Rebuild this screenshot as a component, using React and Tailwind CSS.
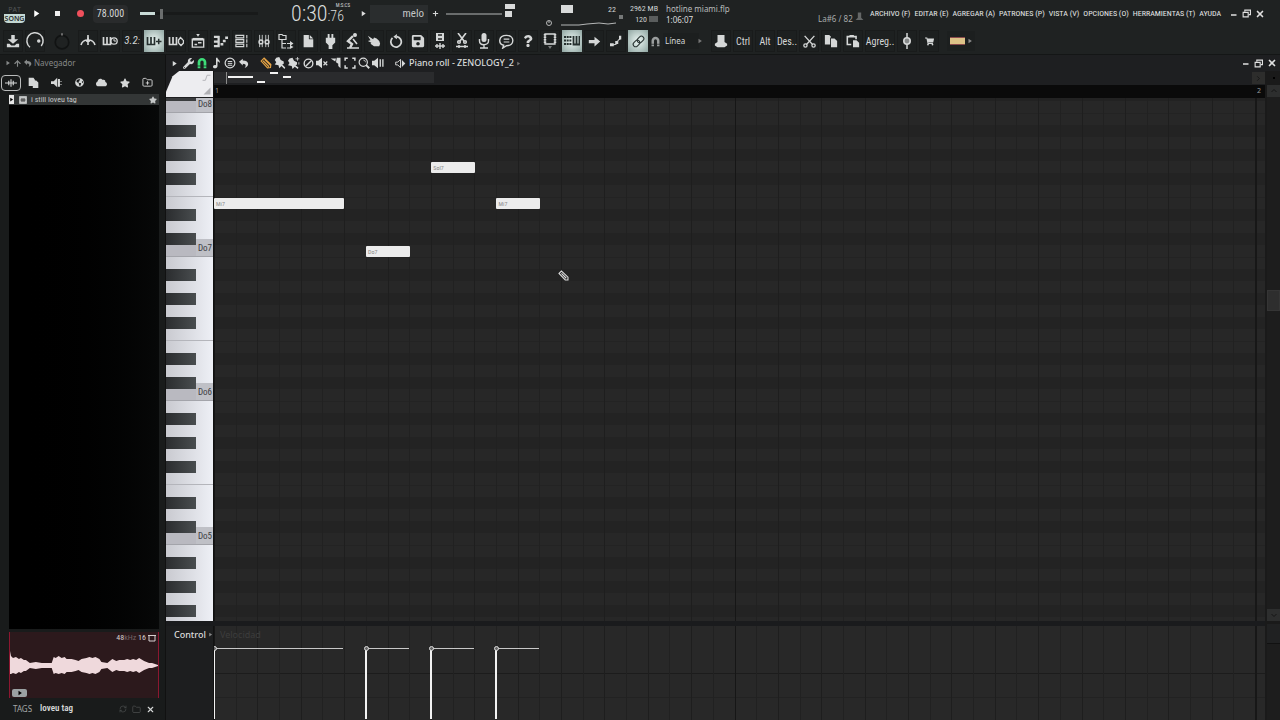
import React, { useState } from 'react';
import { FaSave, FaStar, FaCloud, FaQuestion, FaShoppingCart, FaWrench, FaGlobeAmericas } from 'react-icons/fa';
import { FolderPlus, RefreshCw, Folder, X, ArrowUp } from 'lucide-react';

// Small drawings on a 16 unit canvas
const Svg = ({ size = 14, children, className = '' }) => (
    <svg width={size} height={size} viewBox="0 0 16 16" fill="none" stroke="currentColor" strokeWidth="1.6" aria-hidden="true" className={`shrink-0 ${className}`}>
        {children}
    </svg>
);

const Fill = ({ d, size, className }) => (
    <Svg size={size} className={className}><path d={d} fill="currentColor" stroke="none" /></Svg>
);

const Triangle = ({ size = 8, className }) => <Fill size={size} className={className} d="M4 2l9 6-9 6z" />;

const HorseShoe = ({ size = 12, className }) => (
    <Svg size={size} className={className}><path d="M4 15V7a4 4 0 0 1 8 0v8" strokeWidth="3.6" /><path d="M1 12h14" stroke="#1e2121" strokeWidth="1" /></Svg>
);

const Restore = () => (
    <Svg size={9}><path d="M5 5V2h10v8h-3" strokeWidth="2" /><path d="M2 6h9v8H2z" strokeWidth="2" /></Svg>
);

const Keys = ({ children }) => (
    <Svg size={16}>
        <path d="M1.500 4v7.500h7V4M5 4v7" strokeWidth="1.700" />
        {children}
    </Svg>
);

const TOOLS = [
    { name: 'Metronome', icon: <Svg size={16}><path d="M8 2v10M1 12c1-4 4-5 7-5s6 1 7 5" /><path d="M6 9l2-6 2 6z" fill="currentColor" stroke="none" /></Svg> },
    { name: 'Wait for input', icon: <Keys><circle cx="12" cy="8" r="3.2" strokeWidth="1.3" /><path d="M12 6v2h2" strokeWidth="1" /></Keys> },
    { name: 'Countdown', icon: <span className="text-[11px] italic font-['Roboto_Condensed','Roboto',sans-serif]">3.2<small>:</small></span> },
    { name: 'Blend recording', active: true, icon: <Keys><path d="M10 8.500h5.500M12.700 5.700v5.500" strokeWidth="1.500" /></Keys> },
    { name: 'Loop recording', icon: <Keys><path d="M10.500 10V7l2-2.500 2.500 2.500M15.500 7v3L13 12.500 10.500 10" strokeWidth="1.400" /></Keys> },
    { name: 'Playlist', icon: <Svg size={14}><path d="M1.500 6h13v9h-13z" /><path d="M2 6h12" strokeWidth="3" /><path d="M4 12h3M8 10h4" /><path d="M6 0h4L8 3z" fill="currentColor" stroke="none" /></Svg> },
    { name: 'Piano roll', icon: <Svg size={15}><path d="M1 3h6M1 8h6M1 13h6M6 2v12" strokeWidth="2.400" /><path d="M8 11h3M10.500 7.500h3M13 4h3" strokeWidth="2.600" /></Svg> },
    { name: 'Channel rack', icon: <Svg size={14}><path d="M1 1.500h9v3H1zM1 6.500h9v3H1zM1 11.500h9v3H1zM13.500 1v4M13.500 6v4M13.500 11v4" strokeWidth="1.300" /></Svg> },
    { name: 'Mixer', icon: <Svg size={14}><path d="M3 1v14M6 1v14M10 1v14M13 1v14" strokeWidth="1" /><circle cx="4.500" cy="9" r="2.200" /><circle cx="11.500" cy="9" r="2.200" /></Svg> },
    { name: 'Browser', icon: <Svg size={16}><path d="M1 1.500h3l1 1h3v4H1zM4 7v8h4M4 10.500h4M9 10.500h3M9 15h3" strokeWidth="1.200" /><path d="M12 8l3.500 2.500L12 13zM12 12l3.500 2L12 16z" fill="currentColor" stroke="none" /></Svg> },
    { name: 'Project', icon: <Fill size={14} d="M3 1h6v5h5v9H3zM10 1l4 4h-4z" /> },
    { name: 'Plugins', icon: <Fill size={15} d="M5 0h2v4h2V0h2v4h2v5l-3 3v4H6v-4L3 9V4h2z" /> },
    { name: 'Tempo tapper', icon: <Svg size={16}><circle cx="11" cy="2" r="1.200" fill="currentColor" /><path d="M9 3L4 8l4 3-2 4" strokeWidth="2.400" /><path d="M3 15h12M9 6l4 5" strokeWidth="1.600" /></Svg> },
    { name: 'Touch', icon: <Fill size={14} d="M1 2l6 4 1-2 3 1 3 3 1 3-1 3H8l-4-3 1-1-4-2 3-1z" /> },
    { name: 'Undo', icon: <Svg size={14}><path d="M9 3a6 6 0 1 1-5 1.500" strokeWidth="2" /><path d="M9 0v6L5 3z" fill="currentColor" stroke="none" /></Svg> },
    { name: 'Save', icon: <FaSave size={14} /> },
    { name: 'Save new version', icon: <Svg size={16}><path d="M4 0h8v8H4z" fill="currentColor" stroke="none" /><path d="M6 6h4M6 2h4" stroke="#222424" /><path d="M3 13h10M5 11v4M8 10v6M11 11v4" strokeWidth="1.400" /></Svg> },
    { name: 'Cut sample', icon: <Svg size={16}><path d="M4 0l6 8M12 0L6 8" /><circle cx="5" cy="9" r="1.300" /><circle cx="11" cy="9" r="1.300" /><path d="M2 13.500h12M5 12v3M11 12v3" strokeWidth="1.500" /></Svg> },
    { name: 'Record audio', icon: <Svg size={16}><rect x="5.500" y="0" width="5" height="9" rx="2.500" fill="currentColor" stroke="none" /><path d="M3.500 6v2c0 5 9 5 9 0V6M8 12v3M4 15h8" strokeWidth="1.400" /></Svg> },
    { name: 'Feedback', icon: <Svg size={15}><path d="M5 12L4 15l4-2.500c9 0 9-11 0-11s-9 9-3 10.500z" strokeWidth="1.500" /><path d="M5 5.500h6M5 8.500h6" strokeWidth="1.200" /></Svg> },
    { name: 'Help', icon: <FaQuestion size={12} /> },
    { name: 'Arrangement', icon: <Svg size={16}><path d="M3 1h10v10H3z" strokeWidth="1.300" /><path d="M3 1v10M13 1v10" strokeWidth="2.500" strokeDasharray="1.500 1" /><path d="M6 13h4l-2 3z" fill="currentColor" stroke="none" opacity=".5" /></Svg> },
    { name: 'Typing keyboard', active: true, icon: <Svg size={16}><path d="M0 4h8M0 7.500h8M0 11h8" strokeDasharray="2 .7" strokeWidth="2" /><path d="M9.500 3v8.500h6V3M12.500 3v8" strokeWidth="1.800" /></Svg> },
    { name: 'Step', icon: <Fill size={13} d="M1 6h7V2l7 6-7 6v-4H1z" /> },
    { name: 'Glide', icon: <Svg size={12}><path d="M2 13h3c6 0 4-4 6-6 2-1 3-2 3-4" strokeWidth="1.400" /><path d="M0 11h5v4H0zM12 1h3v5h-3zM7 8h4v4H7z" fill="currentColor" stroke="none" /></Svg> },
    { name: 'Link', active: true, icon: <Svg size={13}><g transform="rotate(-45 8 8)"><rect x="0" y="5" width="9" height="6" rx="3" strokeWidth="1.300" /><rect x="7" y="5" width="9" height="6" rx="3" strokeWidth="1.300" /></g></Svg> },
];

const EDIT_TOOLS = [
    { name: 'Menu', icon: <Triangle size={7} /> },
    { name: 'Tools', icon: <FaWrench size={11} /> },
    { name: 'Snap', icon: <HorseShoe size={12} className="text-[#3ddc78]" /> },
    { name: 'Stamp', icon: <Fill size={12} d="M8 1h2c0 3 4 3 3 7-1-2-2-2-3-2v6c0 4-6 4-6 1 0-2 2-3 4-2z" /> },
    { name: 'Ghost', icon: <Svg size={12}><circle cx="8" cy="8" r="6.500" /><path d="M5 6h6M5 8.500h6M5 11h6" strokeWidth="1.300" /></Svg> },
    { name: 'Undo', icon: <Fill size={10} d="M0 6l6-5v3c11 0 11 9 3 12 3-4 2-7-3-7v3z" /> },
];

const DRAW_TOOLS = [
    { name: 'Draw', icon: <Svg size={12} className="text-[#e8a545]"><path d="M1.500 5.500l4-4 9 8.500-.5 4-4 .5zM4 5l8 8M6 3l8 8" strokeWidth="1.500" /></Svg> },
    { name: 'Paint', icon: <Fill size={12} d="M3 1l4-1 2 4 4 2v3l-2 1 4 4-1 2-4-4-3 3-1-4-5-1 2-3-2-3z" /> },
    { name: 'Paint sequence', icon: <Fill size={12} d="M2 2l4-1 2 4 4 2v3l-2 1 4 3-1 2-4-3-3 3-1-4-5-1 2-3-2-3zM12 0h1v2h2v1h-2v2h-1V3h-2V2h2zM14 7h1v3h-1z" /> },
    { name: 'Delete', icon: <Svg size={11}><circle cx="8" cy="8" r="6.300" strokeWidth="2" /><path d="M4 12l8-8" strokeWidth="2" /></Svg> },
    { name: 'Mute', icon: <Svg size={12}><path d="M0 5h3l5-4v14l-5-4H0z" fill="currentColor" stroke="none" /><path d="M10 6l5 5M15 6l-5 5" /></Svg> },
    { name: 'Slice', icon: <Fill size={12} d="M1 2h7l-1 4zM9 1h5v14l-3-3V9L8 7z" /> },
    { name: 'Select', icon: <Svg size={12}><path d="M1.500 5V1.500H5M11 1.500h3.500V5M14.500 11v3.500H11M5 14.500H1.500V11" strokeWidth="2" /></Svg> },
    { name: 'Zoom', icon: <Svg size={12}><circle cx="7" cy="7" r="5.500" /><path d="M10.500 10.500L15 15" strokeWidth="2.500" /><path d="M7 4a3 3 0 0 1 3 3" strokeWidth="1" /></Svg> },
    { name: 'Playback', icon: <Svg size={12}><path d="M0 5h3l5-4v14l-5-4H0z" fill="currentColor" stroke="none" /><path d="M11 3v10M14.500 3v10" strokeWidth="1.800" /></Svg> },
];

const MENUS = ['ARCHIVO (F)', 'EDITAR (E)', 'AGREGAR (A)', 'PATRONES (P)', 'VISTA (V)', 'OPCIONES (O)', 'HERRAMIENTAS (T)', 'AYUDA'];

// Chromatic rows from Do8 down to Fa4
const OCTAVE = ['B', 'A#', 'A', 'G#', 'G', 'F#', 'F', 'E', 'D#', 'D', 'C#', 'C'];
const ROWS = [{ note: 'C', label: 'Do8' }];
for (let octave = 7; octave > 4; octave--) {
    OCTAVE.forEach(note => ROWS.push({ note, label: note === 'C' ? `Do${octave}` : '' }));
}
OCTAVE.slice(0, 7).forEach(note => ROWS.push({ note, label: '' }));

// start and length in 1/48 of a bar, row counted from Do8
const NOTES = [
    { name: 'Mi7', start: 0, length: 6, row: 8 },
    { name: 'Do7', start: 7, length: 2, row: 12 },
    { name: 'Sol7', start: 10, length: 2, row: 5 },
    { name: 'Mi7', start: 13, length: 2, row: 8 },
];
const percent = (steps) => `${(steps / 48) * 100}%`;

const ToolButton = ({ name, active, children }) => (
    <button
        type="button"
        aria-label={name}
        className={active
            ? 'w-5 h-[22px] shrink-0 flex items-center justify-center text-[#26302f] bg-radial from-[#eef8f5] to-[#8fa5a1]'
            : 'w-5 h-[22px] shrink-0 flex items-center justify-center text-[#d5d7d7] bg-[#1d2020] border border-[#191b1b]'}
    >
        {children}
    </button>
);

const TextTool = ({ children, wide }) => (
    <button type="button" className={`${wide ? 'w-[30px]' : 'w-5'} h-[22px] shrink-0 flex items-center justify-center text-[10px] bg-[#1d2020] border border-[#191b1b] whitespace-nowrap font-['Roboto_Condensed','Roboto',sans-serif]`}>
        {children}
    </button>
);

const WindowButtons = ({ className = '' }) => (
    <div className={`shrink-0 flex items-center text-[#e0e0e0] ${className}`}>
        <button type="button" aria-label="Minimize" className="w-[13px] flex justify-center"><Svg size={8}><path d="M2 10h11" strokeWidth="3" /></Svg></button>
        <button type="button" aria-label="Restore" className="w-[13px] flex justify-center"><Restore /></button>
        <button type="button" aria-label="Close" className="w-[13px] flex justify-center"><X size={10} strokeWidth={4} /></button>
    </div>
);

const Transport = () => {
    const [tempo, setTempo] = useState('78.000');
    const [volume, setVolume] = useState(17);

    return (
        <div className="h-[27px] flex items-center pl-1 pr-[14px] whitespace-nowrap">
            <button type="button" aria-label="Pattern or song mode" className="w-[21px] shrink-0 text-[7px] leading-[9px] font-['Open_Sans',sans-serif]">
                <span className="block text-[#555858]">PAT</span>
                <span className="block bg-[#c4d8d4] text-[#1d2423] font-semibold rounded-b-sm">SONG</span>
            </button>
            <button type="button" aria-label="Play" className="w-[22px] shrink-0 flex justify-center text-white"><Triangle size={9} /></button>
            <button type="button" aria-label="Stop" className="w-5 shrink-0 flex justify-center"><span className="size-[5px] bg-[#eee]" /></button>
            <button type="button" aria-label="Record" className="w-[26px] shrink-0 flex justify-center"><span className="size-[7px] rounded-full bg-[#f0505c]" /></button>
            <label className="w-[35px] h-[18px] shrink-0 flex items-center rounded-sm bg-[#292b2c]">
                <input
                    aria-label="Tempo"
                    value={tempo}
                    onChange={(e) => setTempo(e.target.value)}
                    className="w-full bg-transparent text-[10px] text-[#d4d6d6] text-center outline-none font-['Roboto_Condensed','Roboto',sans-serif]"
                />
            </label>
            <div className="w-[118px] shrink-0 ml-3 flex items-center">
                <input
                    type="range"
                    aria-label="Master volume"
                    value={volume}
                    onChange={(e) => setVolume(e.target.value)}
                    className="w-full h-[3px] appearance-none outline-none [&::-webkit-slider-thumb]:appearance-none [&::-webkit-slider-thumb]:w-[3px] [&::-webkit-slider-thumb]:h-2.5 [&::-webkit-slider-thumb]:bg-[#6b6e6e]"
                    style={{ background: `linear-gradient(to right, #c9dbd7 ${volume - 4}%, #181a1a ${volume - 4}%)` }}
                />
            </div>
            <div className="w-[92px] shrink-0 pr-1.5 h-[27px] flex items-center justify-end text-[#dadcdc] font-light font-['Roboto_Condensed','Roboto',sans-serif]">
                <span className="text-[22px] leading-[27px]">0:30</span>
                <span className="relative text-[14px] leading-[14px] pt-1">
                    :76
                    <small className="absolute -right-1.5 -top-1 text-[5px] leading-[8px] font-normal">M:S:CS</small>
                </span>
            </div>
            <Triangle size={7} className="ml-2.5 mr-[3px] text-[#ddd]" />
            <select aria-label="Pattern" className="w-[58px] h-[18px] shrink-0 pr-1 appearance-none bg-[#2a2d2e] text-right text-[11px] leading-[18px] text-[#c4c6c6] outline-none font-['Roboto_Condensed','Roboto',sans-serif]">
                <option>melo</option>
            </select>
            <button type="button" aria-label="Add pattern" className="w-3.5 shrink-0 flex justify-center"><Svg size={7}><path d="M8 2v12M2 8h12" strokeWidth="2.500" /></Svg></button>
            <svg width="74" height="22" viewBox="0 0 74 22" className="ml-1 shrink-0" aria-hidden="true">
                <path d="M0 11h56" stroke="#b5b7b7" />
                <path d="M59 1h10v5H59zM59 8h7v6H59z" fill="#d8dada" />
            </svg>
            <div className="relative ml-5 shrink-0">
                <svg width="84" height="26" viewBox="0 0 84 26" aria-hidden="true">
                    <circle cx="9" cy="22" r="2.500" fill="none" stroke="#b5b7b7" /><path d="M9 20v2" stroke="#b5b7b7" />
                    <path d="M21 4h12v8H21z" fill="#d8dada" />
                    <path d="M21 24h18l8-1 12-1 9 1 8-1" fill="none" stroke="#b5b7b7" />
                    <path d="M79 14h4v4h-4z" fill="#757878" />
                </svg>
                <span className="absolute right-2 top-1 text-[8px] leading-[10px] font-['Roboto_Condensed','Roboto',sans-serif]">22</span>
            </div>
            <div className="w-[34px] shrink-0 text-right text-[8px] leading-[11px] text-[#d0d2d2] font-['Roboto_Condensed','Roboto',sans-serif]">
                <div>2962 MB</div>
                <div className="flex justify-end items-center gap-0.5">120 <span className="w-[9px] h-[6px] bg-[#5a5d5d]" /></div>
            </div>
            <div className="ml-2 w-[152px] shrink-0 text-[8px] leading-[11px] text-[#b9bbbb]">
                <div>hotline miami.flp</div>
                <div className="text-[#dadcdc]">1:06:07</div>
            </div>
            <div className="self-end h-[17px] shrink-0 text-[8px] leading-[17px] text-[#a9abab] flex items-center gap-1">La#6 / 82 <Fill size={9} className="-mt-1 -ml-0.5 text-[#646767]" d="M5 1h6v9l4 4H1l4-4z" /></div>
            <nav className="ml-auto mr-1.5 flex gap-1 text-[8px] text-[#e6e8e8] font-['Roboto_Condensed','Roboto',sans-serif]">
                {MENUS.map(menu => <button type="button" key={menu}>{menu}</button>)}
            </nav>
            <WindowButtons />
        </div>
    );
};

const Toolbar = () => (
    <div className="h-[27px] pt-px flex items-center gap-0.5 pl-[3px] text-[#d5d7d7]">
        <ToolButton name="Export"><Fill size={14} d="M6 1h4v5h4l-6 5-6-5h4zM1 11h3l2 2h4l2-2h3v4H1z" /></ToolButton>
        <ToolButton name="Main volume"><Svg size={20}><path d="M4 13a6.500 6.500 0 1 1 9-1" strokeWidth="1.200" /><circle cx="11" cy="8" r=".6" fill="currentColor" /></Svg></ToolButton>
        <div className="w-[29px] flex justify-center"><Svg size={18} className="text-[#111313]"><circle cx="8" cy="9" r="6" strokeWidth="1.500" /><path d="M8 1v2" stroke="#777" /></Svg></div>
        <div className="flex gap-0.5">
            {TOOLS.map(tool => <ToolButton key={tool.name} name={tool.name} active={tool.active}>{tool.icon}</ToolButton>)}
        </div>
        <label className="flex items-center gap-0.5 w-[59px] pl-0.5">
            <HorseShoe size={11} className="-ml-0.5 text-[#9a9d9d]" />
            <select aria-label="Snap" className="w-9 h-4 pl-0.5 appearance-none bg-[#1c1f1f] text-[8px] outline-none"><option>Línea</option></select>
            <Triangle size={6} className="-ml-1 text-[#777]" />
        </label>
        <ToolButton name="Hat"><Fill size={14} d="M4 1h8v8l3 2v2l-3 2H4l-3-2v-2l3-2z" /></ToolButton>
        <TextTool>Ctrl</TextTool>
        <TextTool>Alt</TextTool>
        <TextTool>Des..</TextTool>
        <ToolButton name="Cut"><Svg size={13}><path d="M2 1l10 11M14 1L4 12" /><circle cx="3" cy="13" r="2" /><circle cx="13" cy="13" r="2" /></Svg></ToolButton>
        <ToolButton name="Copy"><Fill size={14} d="M1 1h5l2 2v1H7v8H1zM8 5h4l3 3v7H8z" /></ToolButton>
        <ToolButton name="Paste"><Svg size={14}><path d="M6 12H1.500V3h10v3M4 2h5" strokeWidth="1.800" /><path d="M8 7h4l3 3v5H8z" fill="currentColor" stroke="none" /></Svg></ToolButton>
        <TextTool wide>Agreg..</TextTool>
        <ToolButton name="Slider"><Svg size={16}><path d="M8 0v16" strokeWidth="1.500" /><circle cx="8" cy="8" r="3.200" fill="#858888" /></Svg></ToolButton>
        <ToolButton name="Shop"><FaShoppingCart size={9} /></ToolButton>
        <button type="button" aria-label="Language" className="ml-1.5 h-5 w-7 flex items-center justify-center gap-0.5 bg-[#1c1f1f]">
            <span className="w-[15px] h-2 bg-[#dcc287] border-y border-[#8a4a4c]" />
            <Triangle size={6} className="text-[#888]" />
        </button>
    </div>
);

const WAVE = [[0, 14], [1, 9], [3, 7], [6, 8], [9, 6], [11, 7], [14, 5], [16, 5], [20, 2], [26, 3], [32, 2], [38, 2], [42, 2], [44, 8], [46, 7], [49, 9], [52, 7], [55, 8], [57, 6], [62, 6], [66, 5], [69, 4], [72, 6], [77, 7], [80, 8], [83, 7], [86, 8], [90, 6], [92, 3], [98, 2], [103, 6], [107, 4], [110, 5], [115, 5], [118, 6], [121, 5], [124, 6], [127, 5], [130, 7], [135, 4], [140, 2], [143, 2], [146, 1], [149, 0]];
const wavePoints = [
    ...WAVE.map(([x, a]) => `${x},${33 - a}`),
    ...[...WAVE].reverse().map(([x, a]) => `${x},${34 + Math.min(a, 8)}`),
].join(' ');

const Browser = () => (
    <aside className="w-[166px] shrink-0 flex flex-col pl-[9px] pr-1.5 bg-[#191b1b] border-r border-[#111]">
        <div className="h-4 flex items-center gap-0.5 -ml-1 text-[8px] text-[#868989]">
            <Triangle size={6} />
            <ArrowUp size={9} strokeWidth={3} />
            <Fill size={8} d="M0 6l6-5v3c11 0 11 9 3 12 3-4 2-7-3-7v3z" />
            Navegador
        </div>
        <div className="h-[23px] flex items-center -ml-2 text-[#d5d7d7]">
            {[
                ['All', <Svg size={12}><path d="M0 8h16M5 5v6M8 3v10M11 5v6" strokeWidth="1.500" /></Svg>],
                ['Files', <Fill size={11} d="M1 1h7l2 3v9H1zM7 5h5l3 3v8H7z" />],
                ['Sounds', <Fill size={11} d="M0 6h4l5-5v14L4 10H0zM10 3h3v3h3v1h-3v3h3v1h-3v3h-3z" />],
                ['Online', <FaGlobeAmericas size={9} />],
                ['Cloud', <FaCloud size={11} />],
                ['Starred', <FaStar size={10} />],
                ['Add folder', <FolderPlus size={11} />],
            ].map(([name, icon], i) => (
                <button key={name} type="button" aria-label={name} className={i === 0 ? 'w-5 h-4 mr-px flex items-center justify-center border border-[#b9bbbb] rounded-sm' : 'w-[23px] h-4 flex items-center justify-center'}>
                    {icon}
                </button>
            ))}
        </div>
        <a href="#tag" className="h-[11px] shrink-0 flex items-center gap-1 bg-[#333636] text-[8px] leading-[11px] text-[#c4c6c6] font-['Roboto_Condensed','Roboto',sans-serif]">
            <span className="w-[5px] h-[9px] bg-[#e6e6e6] flex items-center justify-center text-black"><Triangle size={5} /></span>
            <Svg size={8} className="ml-px"><path d="M1 1h14v14H1z" fill="#c4c6c6" /><path d="M3 8h10M6 4v8M10 4v8" stroke="#222" /></Svg>
            i still loveu tag
            <FaStar size={8} className="ml-auto mr-0.5" />
        </a>
        <div className="flex-1 min-h-0 bg-gradient-to-r from-black to-[#070808]" />
        <div className="h-[3px]" />
        <div className="relative h-[66px] shrink-0 bg-[#2c191c] border-x border-[#8c1730]">
            <svg width="100%" height="66" viewBox="0 0 149 66" preserveAspectRatio="none" aria-hidden="true">
                <polygon points={wavePoints} fill="#efd9dc" />
            </svg>
            <div className="absolute top-0.5 right-0.5 flex items-center gap-0.5 text-[8px] leading-[8px] text-[#d6d0d0] font-['Roboto_Condensed','Roboto',sans-serif]">
                <span>48<span className="text-[#756466]">kHz</span> 16</span>
                <Svg size={8}><path d="M2 3h12v11H2zM0 3h4M12 3h4" strokeWidth="2" /></Svg>
            </div>
            <button type="button" aria-label="Preview" className="absolute left-0.5 bottom-px w-[15px] h-2 bg-[#9ba2a3] rounded-xs flex items-center justify-center text-black"><Triangle size={6} /></button>
        </div>
        <div className="h-[22px] shrink-0 flex items-center pl-1 pr-1 text-[8px] text-[#a5a8a8]">
            TAGS
            <span className="ml-2 text-[9px] font-semibold text-[#d6d8d8] font-['Roboto_Condensed','Roboto',sans-serif]">loveu tag</span>
            <span className="ml-auto flex items-center gap-[5px] text-[#4c4f4f]">
                <RefreshCw size={8} /><Folder size={9} /><X size={9} strokeWidth={3} className="text-[#d6d8d8]" />
            </span>
        </div>
    </aside>
);

const StepLines = () => (
    <div className="absolute inset-0 flex pr-2">
        {Array.from({ length: 48 }, (_, i) => (
            <div key={i} className={i % 24 === 0 ? 'flex-1 border-l border-[#161616]' : i % 2 === 0 ? 'flex-1 border-l border-[#1e1e1e]' : 'flex-1 border-l border-[#212121]'} />
        ))}
        <div className="border-l-2 border-[#171717]" />
    </div>
);

const PianoKeys = () => (
    <div className="w-12 shrink-0 border-r border-[#111] overflow-hidden bg-gradient-to-r from-[#c9cad0] to-[#eef0f6]">
        <div className="w-[30px] h-[3px] bg-[#3a3c3e]" />
        {ROWS.map(({ note, label }, i) => (
            <div key={i} className={note === 'C' ? 'relative h-3 bg-[#b9b9c0] border-b border-[#a3a4aa]' : note === 'F' ? 'h-3 border-b border-[#b4b5bb]' : 'h-3'}>
                {note.includes('#') && <div className="w-[30px] h-3 bg-gradient-to-r from-[#2b2d2f] to-[#494d4f]" />}
                {label && <span className="absolute right-0 bottom-0 w-[17px] h-[17px] bg-[#bfc0c6] pr-px text-right text-[9px] leading-[19px] text-[#3c3d42] font-['Roboto_Condensed','Roboto',sans-serif]">{label}</span>}
            </div>
        ))}
    </div>
);

const NoteGrid = () => (
    <div className="relative flex-1 overflow-hidden bg-[#272727]">
        <div className="h-[3px] bg-[#222]" />
        {ROWS.map(({ note }, i) => (
            <div key={i} className={note.includes('#') ? 'h-3 bg-[#232323]' : note === 'E' || note === 'B' ? 'h-3 bg-[#272727] border-t border-[#232323]' : 'h-3 bg-[#272727]'} />
        ))}
        <StepLines />
        <div className="absolute inset-0 mr-2">
            {NOTES.map(({ name, start, length, row }) => (
                <div
                    key={start}
                    className="absolute h-[11px] rounded-[1px] bg-[#ececec] pl-0.5 text-[6px] leading-[11px] text-[#8b8b8b] font-['Roboto_Condensed','Roboto',sans-serif]"
                    style={{ left: percent(start), width: percent(length), top: row * 12 + 4 }}
                >
                    {name}
                </div>
            ))}
            <Svg size={11} className="absolute left-[33%] top-[172px] text-[#dcdcdc]"><path d="M1.500 5l3.500-3.500 9.500 9v4h-4zM5 5l7 7" strokeWidth="1.600" /></Svg>
        </div>
    </div>
);

const ControlLane = () => (
    <div className="h-[94px] shrink-0 flex">
        <div className="w-12 shrink-0 pt-0.5 pl-2 flex items-start gap-0.5 text-[9px] leading-[13px] font-medium text-[#dcdcdc] bg-[#1d1e1f] border-r border-[#111]">
            Control <Triangle size={5} className="mt-1 text-[#888]" />
        </div>
        <div className="relative flex-1 bg-[#282828] overflow-hidden">
            <div className="h-12 border-b border-[#1c1c1c]" />
            <div className="h-6 border-b border-[#222]" />
            <StepLines />
            <span className="absolute left-1.5 top-0.5 text-[9px] leading-[13px] text-[#3d3d3d]">Velocidad</span>
            <div className="absolute inset-0 mr-2">
                {NOTES.map(({ start, length }) => (
                    <div key={start} className="absolute top-[22px] bottom-px -ml-px border-t border-l-2 border-t-[#c8c8c8] border-l-[#f2f2f2]" style={{ left: percent(start), width: percent(length) }}>
                        <span className="absolute -left-[3px] -top-[3px] size-[5px] rounded-full border border-[#ddd] bg-[#666]" />
                    </div>
                ))}
            </div>
        </div>
    </div>
);

const Arrow = ({ up }) => (
    <button type="button" aria-label={up ? 'Scroll up' : 'Scroll down'} className="h-3 shrink-0 bg-[#2d2e2e] text-[#151515] flex items-center justify-center">
        <Svg size={8}><path d={up ? 'M3 10l5-5 5 5' : 'M3 6l5 5 5-5'} strokeWidth="2" /></Svg>
    </button>
);

const PianoRoll = () => (
    <main className="flex-1 min-w-0 flex flex-col bg-[#1e1f21]">
        <div className="h-4 shrink-0 flex items-center pl-px text-[#d8dada]">
            {EDIT_TOOLS.map(({ name, icon }) => <button key={name} type="button" aria-label={name} className="w-3.5 flex justify-center">{icon}</button>)}
            <span className="w-2" />
            {DRAW_TOOLS.map(({ name, icon }) => <button key={name} type="button" aria-label={name} className="w-3.5 flex justify-center">{icon}</button>)}
            <Svg size={11} className="ml-2.5 mr-[3px]"><path d="M1 6v4h3l4 4V2L4 6z" strokeWidth="1.400" /><path d="M10 3l5 5-5 5z" fill="currentColor" stroke="none" /></Svg>
            <h1 className="text-[9px] font-medium">Piano roll - ZENOLOGY_2</h1>
            <Triangle size={5} className="ml-0.5 text-[#777]" />
            <WindowButtons className="ml-auto pr-0.5" />
        </div>
        <div className="flex-1 min-h-0 flex">
            <div className="flex-1 min-w-0 flex flex-col">
                <div className="h-[27px] shrink-0 flex">
                    <div className="w-12 shrink-0 border-r border-[#111]">
                        <div className="h-[26px] bg-[#ededf0] [clip-path:polygon(28%_0,100%_0,100%_100%,0_100%,0_80%,14%_20%)] flex flex-col items-end justify-between p-0.5 text-[#b0b0b4]">
                            <Svg size={9}><path d="M1 13h5l3-9h6" /></Svg>
                            <Fill size={8} d="M15 1v14H1z" />
                        </div>
                    </div>
                    <div className="flex-1">
                        <div className="h-[14px] pt-px flex justify-between">
                            <svg width="220" height="12" viewBox="0 0 220 12" aria-hidden="true">
                                <path d="M0 0h220v11H0z" fill="#2a2b2d" />
                                <path d="M12.500 0v12" stroke="#8a8a8a" />
                                <path d="M14 5h25M43 10h8M56 1h8M69 5h8" stroke="#f2f2f2" strokeWidth="2" />
                            </svg>
                            <button type="button" aria-label="Scroll right" className="w-[13px] h-3 bg-[#2d2d2c] text-[#151515] flex items-center justify-center"><Svg size={7}><path d="M5 3l5 5-5 5" strokeWidth="2" /></Svg></button>
                        </div>
                        <div className="h-[13px] pl-px pr-1 flex justify-between items-center bg-[#0a0a0a] text-[7px] text-[#9a9a9a]"><span>1</span><span>2</span></div>
                    </div>
                </div>
                <div className="flex-1 min-h-0 flex"><PianoKeys /><NoteGrid /></div>
                <div className="h-[5px] shrink-0 bg-[#1a1b1d]" />
                <ControlLane />
            </div>
            <div className="w-[15px] shrink-0 flex flex-col pl-0.5 bg-[#1a1a1a]">
                <div className="h-[14px] shrink-0 flex items-center justify-center"><span className="size-0.5 bg-black" /></div>
                <Arrow up />
                <div className="flex-[193] bg-[#1d1d1d]" />
                <div className="h-[21px] bg-[#2e2e2e] border border-[#353535]" />
                <div className="flex-[298] bg-[#1d1d1d]" />
                <Arrow />
                <div className="h-5 mt-[3px] shrink-0 bg-[#202122] border-b border-[#111]" />
                <div className="h-[76px] shrink-0 bg-[#1d1d1d]" />
            </div>
        </div>
    </main>
);

const App = () => (
    <div className="h-screen flex flex-col overflow-hidden bg-[#1f2222] text-[#d5d7d7] font-['Noto_Sans',sans-serif]">
        <header className="shrink-0 border-b border-[#141616]">
            <Transport />
            <Toolbar />
        </header>
        <div className="flex-1 min-h-0 flex">
            <Browser />
            <PianoRoll />
        </div>
    </div>
);

export default App;
